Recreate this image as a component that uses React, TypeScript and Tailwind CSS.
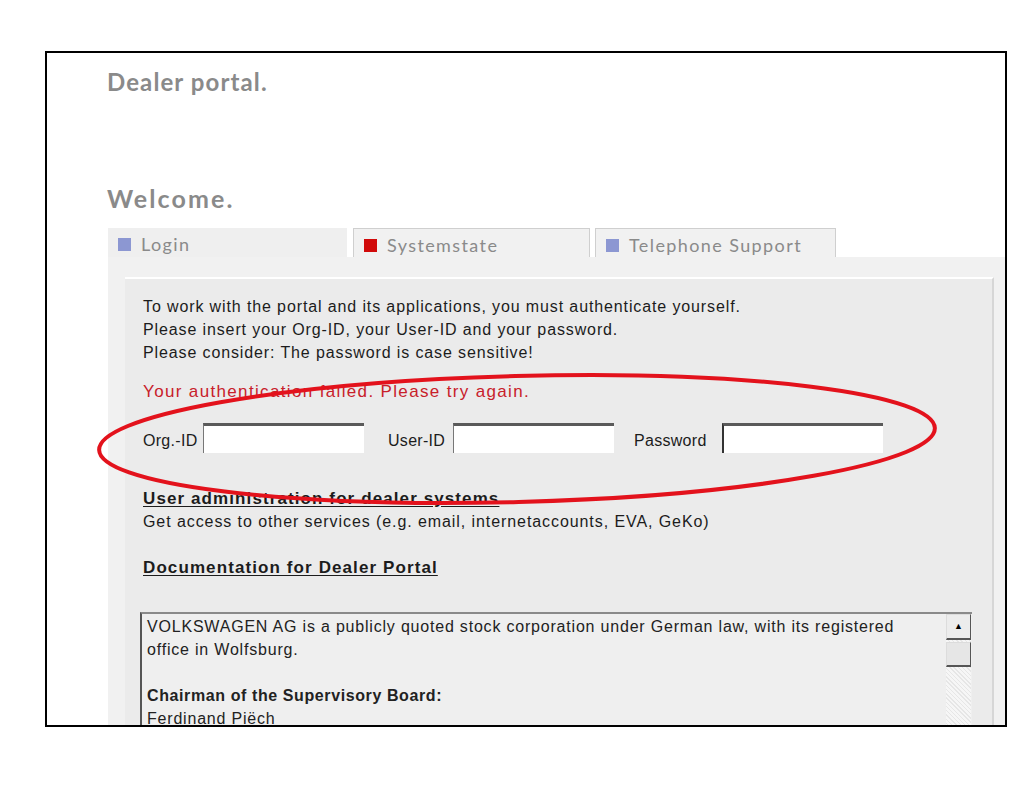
import React from "react";

const tabs = [
  { label: "Login", color: "bg-[#8c97d2]", active: true, width: "w-[239px]" },
  { label: "Systemstate", color: "bg-[#d10a0a]", active: false, width: "w-[237px] ml-[6px]" },
  { label: "Telephone Support", color: "bg-[#8c97d2]", active: false, width: "w-[241px] ml-[5px]" },
];

const fieldInput =
  "h-[30px] w-[161px] border-t-[3px] border-l border-t-[#5a5a5a] border-l-[#777] bg-white outline-none";

const App: React.FC = () => {
  return (
    <div className="relative min-h-[805px] w-[1021px] bg-white pt-[51px] font-['Liberation_Sans',Arial,sans-serif]">
      {/* Framed page */}
      <div className="ml-[45px] h-[676px] w-[962px] overflow-hidden border-2 border-black bg-white">
        <div className="pl-[60px] pt-[15px]">
          <h1 className="font-['Lato',sans-serif] text-[24px] leading-[28px] font-bold tracking-[1.1px] text-[#8a8a8a]">
            Dealer portal.
          </h1>
          <h2 className="mt-[87px] font-['Lato',sans-serif] text-[25px] leading-[30px] font-bold tracking-[2.1px] text-[#8a8a8a]">
            Welcome.
          </h2>

          {/* Tabs */}
          <div className="mt-[15px] ml-[1px] flex">
            {tabs.map((tab) => (
              <div
                key={tab.label}
                className={`flex h-[29px] items-center gap-[10px] pl-[10px] pt-[4px] font-['Lato',sans-serif] text-[18px] tracking-[1.4px] text-[#8a8a8a] ${tab.width} ${
                  tab.active
                    ? "bg-[#efefef]"
                    : "border-t border-l border-r border-[#cfcfcf] bg-[#f1f1f1]"
                }`}
              >
                <span className={`h-[13px] w-[13px] shrink-0 ${tab.color}`}></span>
                <span>{tab.label}</span>
              </div>
            ))}
          </div>

          {/* Panel */}
          <div className="ml-[1px] bg-[#f1f1f1] pt-[20px] pl-[17px]">
            <div className="mr-[11px] border-t-2 border-r-2 border-t-white border-r-[#d6d6d6] bg-[#ebebeb] pl-[18px] pt-[16px] pb-[40px] text-[16px] leading-[23px] tracking-[0.88px] text-[#1c1c1c]">
              <p>To work with the portal and its applications, you must authenticate yourself.</p>
              <p>Please insert your Org-ID, your User-ID and your password.</p>
              <p>Please consider: The password is case sensitive!</p>

              <p className="mt-[16px] text-[17px] tracking-[1.35px] text-[#c8202a]">
                Your authentication failed. Please try again.
              </p>

              {/* Login fields */}
              <div className="mt-[20px] flex h-[30px] items-center whitespace-nowrap tracking-[0.3px]">
                <span className="w-[60px] pt-[4px]">Org.-ID</span>
                <input className={fieldInput} />
                <span className="ml-[24px] w-[65px] pt-[4px]">User-ID</span>
                <input className={fieldInput} />
                <span className="ml-[20px] w-[88px] pt-[4px]">Password</span>
                <input
                  type="password"
                  className="h-[30px] w-[161px] border-t-[3px] border-l-2 border-t-[#5a5a5a] border-l-[#333] bg-white outline-none"
                />
              </div>

              <p className="mt-[34px] text-[17px] font-bold tracking-[1.1px] underline underline-offset-2">
                User administration for dealer systems
              </p>
              <p className="tracking-[0.92px]">
                Get access to other services (e.g. email, internetaccounts, EVA, GeKo)
              </p>

              <p className="mt-[23px] text-[17px] font-bold tracking-[1.1px] underline underline-offset-2">
                Documentation for Dealer Portal
              </p>

              {/* Legal text box */}
              <div className="mt-[33px] -ml-[3px] flex h-[140px] w-[832px] border-t-2 border-l-2 border-t-[#8a8a8a] border-l-[#555] bg-[#efefef] tracking-normal">
                <div className="flex-1 pl-[5px] pt-[1px] text-[16px] leading-[23px] tracking-[0.8px] text-[#222]">
                  <p>
                    VOLKSWAGEN AG is a publicly quoted stock corporation under German law, with its registered
                    <br />
                    office in Wolfsburg.
                  </p>
                  <p className="mt-[23px] font-bold tracking-[0.6px]">Chairman of the Supervisory Board:</p>
                  <p>Ferdinand Piëch</p>
                </div>
                {/* Scrollbar */}
                <div className="mr-[1px] flex w-[25px] flex-col bg-[repeating-linear-gradient(45deg,#f6f6f6_0px,#f6f6f6_2px,#e6e6e6_2px,#e6e6e6_3px)]">
                  <div className="flex h-[26px] items-center justify-center border border-b-2 border-[#dcdcdc] border-b-[#555] border-r-[#555] bg-[#ececec] text-[9px] text-black">
                    ▲
                  </div>
                  <div className="mt-[2px] h-[25px] border border-b-2 border-[#dcdcdc] border-b-[#555] border-r-[#555] bg-[#e6e6e6]"></div>
                </div>
              </div>
            </div>
          </div>
        </div>
      </div>

      {/* Hand-drawn red ellipse */}
      <svg
        className="pointer-events-none absolute left-0 top-0"
        width="1021"
        height="805"
        viewBox="0 0 1021 805"
      >
        <ellipse
          cx="517"
          cy="439"
          rx="418"
          ry="63"
          transform="rotate(-1.5 517 439)"
          fill="none"
          stroke="#e3121c"
          strokeWidth="4"
        />
      </svg>
    </div>
  );
};

export default App;
